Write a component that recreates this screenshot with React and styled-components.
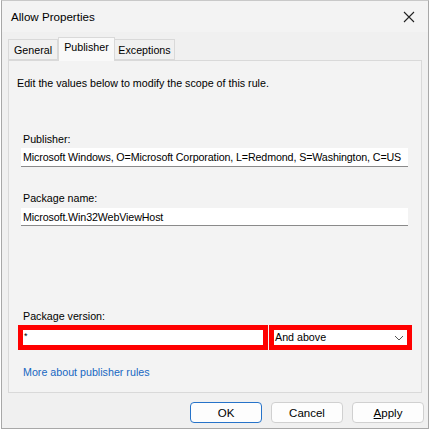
import React from "react";
import styled, { createGlobalStyle } from "styled-components";

const GlobalStyle = createGlobalStyle`
  html, body {
    margin: 0;
    padding: 0;
    background: #ffffff;
  }
  body {
    font-family: "Liberation Sans", Arial, sans-serif;
    font-size: 10.7px;
    color: #000;
  }
`;

/* ---------- window chrome ---------- */

const Window = styled.div`
  box-sizing: border-box;
  width: 428px;
  height: 429px;
  margin-left: 1px;
  border: 1px solid #a8a8a8;
  border-top-color: #c8c8c8;
  background: #f0f0f0;
  display: flex;
  flex-direction: column;
`;

const TitleBar = styled.div`
  height: 31px;
  display: flex;
  align-items: center;
  justify-content: space-between;
  padding: 0 9px 0 9px;
  background: #f3f3f3;
  font-size: 11.6px;
`;

const CloseButton = styled.div`
  width: 16px;
  height: 16px;
  display: flex;
  align-items: center;
  justify-content: center;
  margin-right: 2px;
`;

/* ---------- tabs ---------- */

const TabStrip = styled.div`
  display: flex;
  align-items: flex-end;
  height: 24px;
  margin: 4px 0 0 6px;
`;

const Tab = styled.div`
  box-sizing: border-box;
  width: ${({ $w }) => $w}px;
  height: ${({ $active }) => ($active ? "24px" : "21px")};
  padding-top: ${({ $active }) => ($active ? "3px" : "4px")};
  text-align: center;
  border: 1px solid #d9d9d9;
  border-bottom: ${({ $active }) => ($active ? "none" : "1px solid #d9d9d9")};
  border-left: ${({ $first, $active }) =>
    $first || $active ? "1px solid #d9d9d9" : "none"};
  background: ${({ $active }) => ($active ? "#f9f9f9" : "#f0f0f0")};
  margin-bottom: ${({ $active }) => ($active ? "-1px" : "0")};
  position: relative;
  z-index: ${({ $active }) => ($active ? 1 : 0)};
  white-space: nowrap;
`;

const Panel = styled.div`
  box-sizing: border-box;
  width: 414px;
  height: 333px;
  margin-left: 6px;
  border: 1px solid #d9d9d9;
  background: #f3f3f3;
  padding: 15px 8px 0 8px;
  display: flex;
  flex-direction: column;
`;

const Intro = styled.div`
  line-height: 15px;
`;

const Field = styled.div`
  margin: ${({ $top }) => $top}px 0 0 4px;
  display: flex;
  flex-direction: column;
`;

const Label = styled.div`
  line-height: 15px;
  padding-left: 2px;
  margin-bottom: ${({ $gap }) => $gap || 1}px;
`;

const TextBox = styled.div`
  box-sizing: border-box;
  width: 387px;
  height: ${({ $h }) => $h || 19}px;
  background: #ffffff;
  border-bottom: 1px solid #8a8a8a;
  padding: 2px 0 0 2px;
  line-height: 15px;
  letter-spacing: -0.12px;
  white-space: nowrap;
  overflow: hidden;
`;

/* ---------- highlighted version row ---------- */

const VersionRow = styled.div`
  display: flex;
  margin-left: 1px;
`;

const Highlight = styled.div`
  box-sizing: border-box;
  width: ${({ $w }) => $w}px;
  height: 25px;
  border: 5px solid #ff0000;
  background: #ffffff;
  display: flex;
  align-items: center;
  justify-content: space-between;
  padding: 0 3px 0 1px;
  line-height: 15px;
  margin-right: 1px;
`;

const Star = styled.span`
  font-size: 9px;
  align-self: flex-start;
  margin-top: -1px;
`;

const Link = styled.a`
  color: #1767c2;
  text-decoration: none;
  line-height: 15px;
  margin: 15px 0 0 6px;
  cursor: pointer;
`;

/* ---------- buttons ---------- */

const ButtonRow = styled.div`
  display: flex;
  justify-content: flex-end;
  gap: 9px;
  padding: 9px 4px 0 0;
`;

const Button = styled.button`
  box-sizing: border-box;
  width: 72px;
  height: 21px;
  border-radius: 4px;
  border: 1px solid ${({ $primary }) => ($primary ? "#2673c9" : "#d0d0d0")};
  background: #fdfdfd;
  font-family: "Liberation Sans", Arial, sans-serif;
  font-size: 11.5px;
  color: #000;
  padding: 0;
`;

const Chevron = () => (
  <svg width="10" height="6" viewBox="0 0 10 6">
    <path d="M1 1 L5 5 L9 1" fill="none" stroke="#555" strokeWidth="1" />
  </svg>
);

const CloseIcon = () => (
  <svg width="12" height="12" viewBox="0 0 12 12">
    <path d="M1 1 L11 11 M11 1 L1 11" stroke="#222" strokeWidth="1.1" />
  </svg>
);

export default function App() {
  return (
    <>
      <GlobalStyle />
      <Window>
        <TitleBar>
          <span>Allow Properties</span>
          <CloseButton>
            <CloseIcon />
          </CloseButton>
        </TitleBar>

        <TabStrip>
          <Tab $first $w={50}>General</Tab>
          <Tab $active $w={57}>Publisher</Tab>
          <Tab $w={60}>Exceptions</Tab>
        </TabStrip>

        <Panel>
          <Intro>Edit the values below to modify the scope of this rule.</Intro>

          <Field $top={41}>
            <Label>Publisher:</Label>
            <TextBox>
              Microsoft Windows, O=Microsoft Corporation, L=Redmond, S=Washington, C=US
            </TextBox>
          </Field>

          <Field $top={24}>
            <Label $gap={2}>Package name:</Label>
            <TextBox $h={18}>Microsoft.Win32WebViewHost</TextBox>
          </Field>

          <Field $top={83}>
            <Label $gap={0}>Package version:</Label>
          </Field>
          <VersionRow>
            <Highlight $w={250}>
              <Star>*</Star>
            </Highlight>
            <Highlight $w={143}>
              <span>And above</span>
              <Chevron />
            </Highlight>
          </VersionRow>

          <Link>More about publisher rules</Link>
        </Panel>

        <ButtonRow>
          <Button $primary>OK</Button>
          <Button>Cancel</Button>
          <Button>
            <u>A</u>pply
          </Button>
        </ButtonRow>
      </Window>
    </>
  );
}
